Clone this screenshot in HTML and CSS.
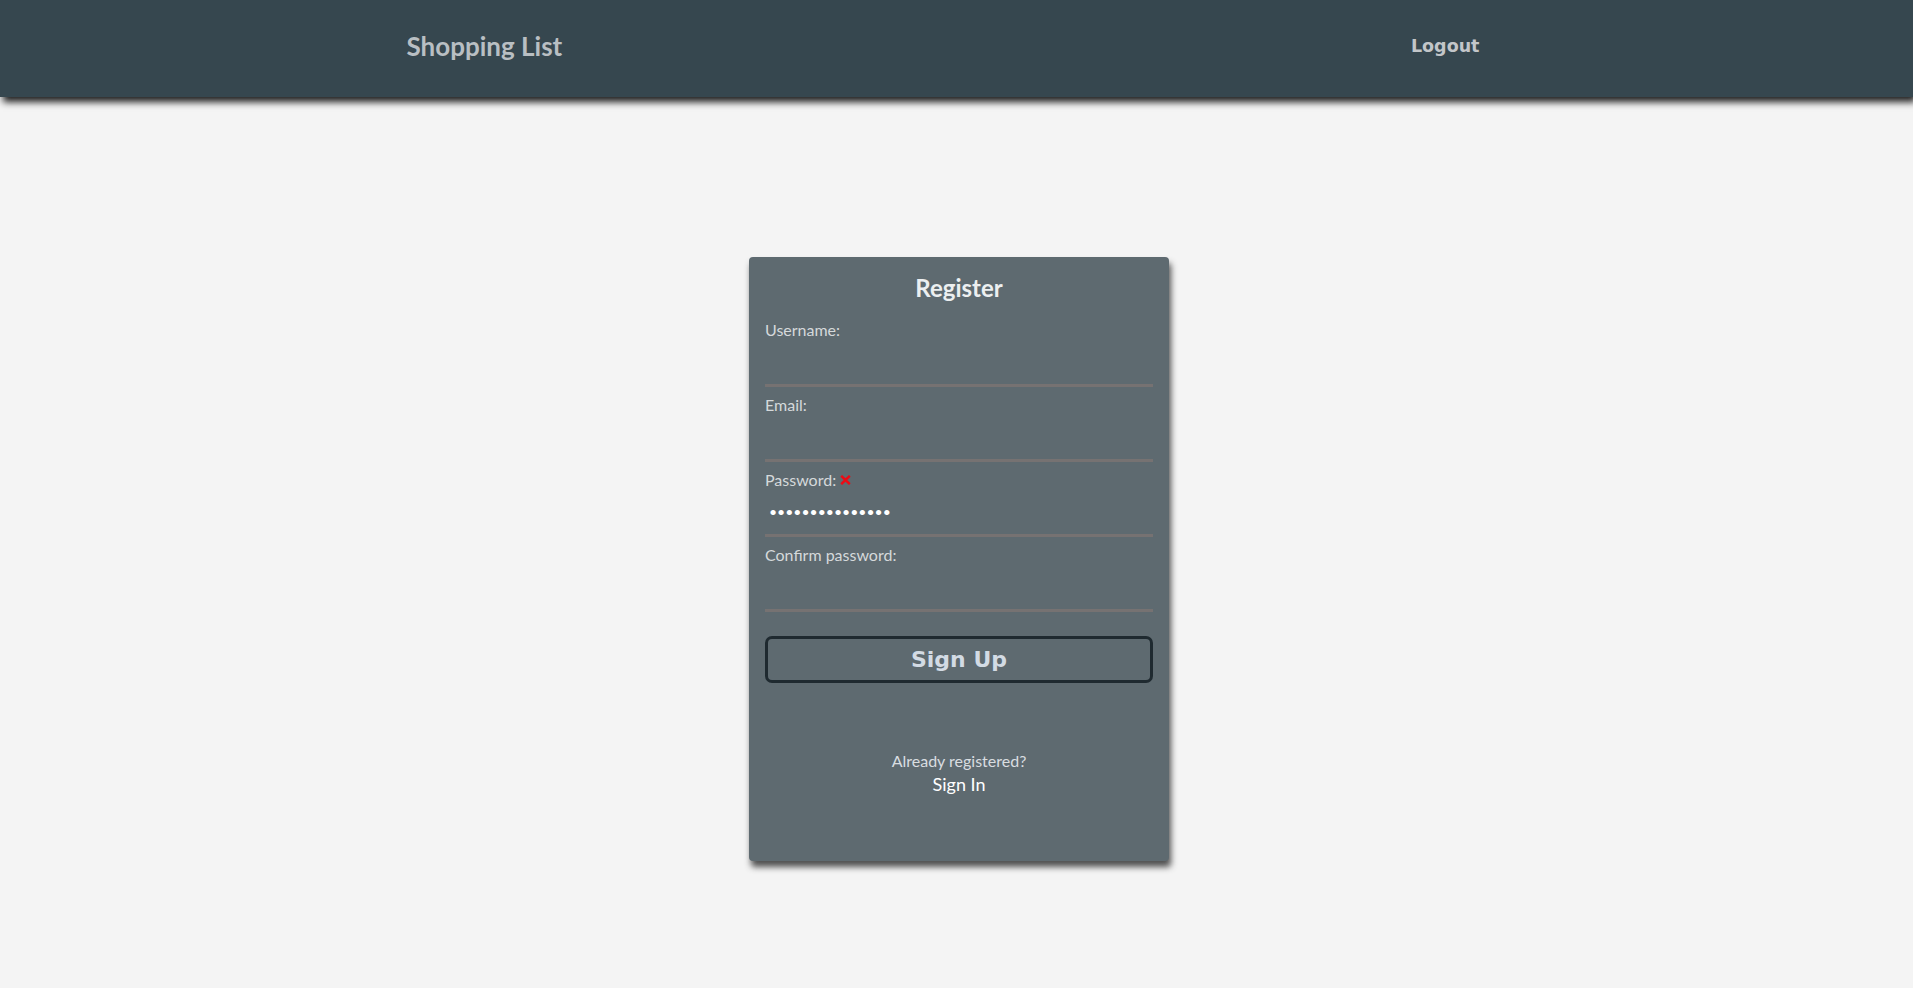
FILE: index.html
```html
<!DOCTYPE html>
<html lang="en">
<head>
<meta charset="utf-8">
<title>Shopping List</title>
<link rel="stylesheet" href="styles.css">
</head>
<body>
<header class="topbar">
  <div class="topbar-inner">
    <a class="brand" href="#">Shopping List</a>
    <a class="logout" href="#">Logout</a>
  </div>
</header>
<main class="page">
  <form class="card">
    <h1 class="card-title">Register</h1>
    <div class="field">
      <label class="field-label">Username:</label>
      <input class="field-input" type="text">
    </div>
    <div class="field">
      <label class="field-label">Email:</label>
      <input class="field-input" type="email">
    </div>
    <div class="field">
      <label class="field-label">Password: <svg class="invalid" width="11" height="10" viewBox="0 0 11 10"><path d="M1.2 0.8 L9.8 9.2 M9.8 0.8 L1.2 9.2" stroke="#ee0a14" stroke-width="2.4" stroke-linecap="butt"/></svg></label>
      <input class="field-input pw" type="password" value="abcdefghijklmno">
    </div>
    <div class="field">
      <label class="field-label">Confirm password:</label>
      <input class="field-input" type="password">
    </div>
    <button class="submit" type="button">Sign Up</button>
    <div class="alt">
      <span class="alt-text">Already registered?</span>
      <a class="alt-link" href="#">Sign In</a>
    </div>
  </form>
</main>
</body>
</html>
```

FILE: styles.css
```css
* { box-sizing: border-box; }
html, body { margin: 0; padding: 0; }
body {
  background: #f4f4f4;
  font-family: "Lato", "Liberation Sans", sans-serif;
  min-height: 988px;
}
.topbar {
  background: #36474f;
  height: 97px;
  box-shadow: 3px 5px 7px rgba(20, 20, 20, 0.95);
}
.topbar-inner {
  max-width: 1100px;
  margin: 0 auto;
  height: 100%;
  display: flex;
  align-items: center;
  justify-content: space-between;
  padding-bottom: 2px;
}
.brand {
  font-family: "Lato", sans-serif;
  font-weight: bold;
  font-size: 26px;
  color: #b9bfc3;
  text-decoration: none;
  margin-top: -4px;
}
.logout {
  font-family: "DejaVu Sans", sans-serif;
  font-weight: bold;
  font-size: 17.5px;
  color: #c3c6c9;
  text-decoration: none;
  margin-right: 27px;
  margin-top: -3px;
}
.page {
  display: flex;
  justify-content: center;
  padding-top: 160px;
  padding-left: 5px;
}
.card {
  width: 420px;
  height: 604px;
  background: #5e6a70;
  border-radius: 4px;
  padding: 16px;
  display: flex;
  flex-direction: column;
  box-shadow: 2px 6px 6px rgba(40, 40, 40, 0.8);
}
.card-title {
  margin: 0 0 18px;
  text-align: center;
  font-size: 24px;
  font-weight: bold;
  line-height: 29px;
  color: #eceff0;
}
.field {
  display: flex;
  flex-direction: column;
  margin-bottom: 8px;
}
.field-label {
  font-size: 16px;
  line-height: 19px;
  color: #d5d9db;
  display: flex;
  align-items: center;
  gap: 4px;
}
.invalid { margin-top: 1px; }
.field-input {
  height: 48px;
  border: none;
  border-bottom: 3px solid #767272;
  background: transparent;
  padding: 0 4px;
  color: #ffffff;
  font-family: "Lato", sans-serif;
  font-size: 14px;
  outline: none;
}
.submit {
  margin-top: 16px;
  height: 47px;
  border: 3px solid #1f2a30;
  border-radius: 7px;
  background: transparent;
  color: #d3dbe4;
  font-family: "DejaVu Sans", sans-serif;
  font-weight: bold;
  font-size: 22px;
}
.alt {
  margin-top: 68px;
  display: flex;
  flex-direction: column;
  align-items: center;
}
.alt-text {
  font-size: 16px;
  line-height: 19px;
  color: #d9dde0;
}
.alt-link {
  margin-top: 3px;
  font-size: 18px;
  line-height: 22px;
  color: #ffffff;
  text-decoration: none;
}
```
